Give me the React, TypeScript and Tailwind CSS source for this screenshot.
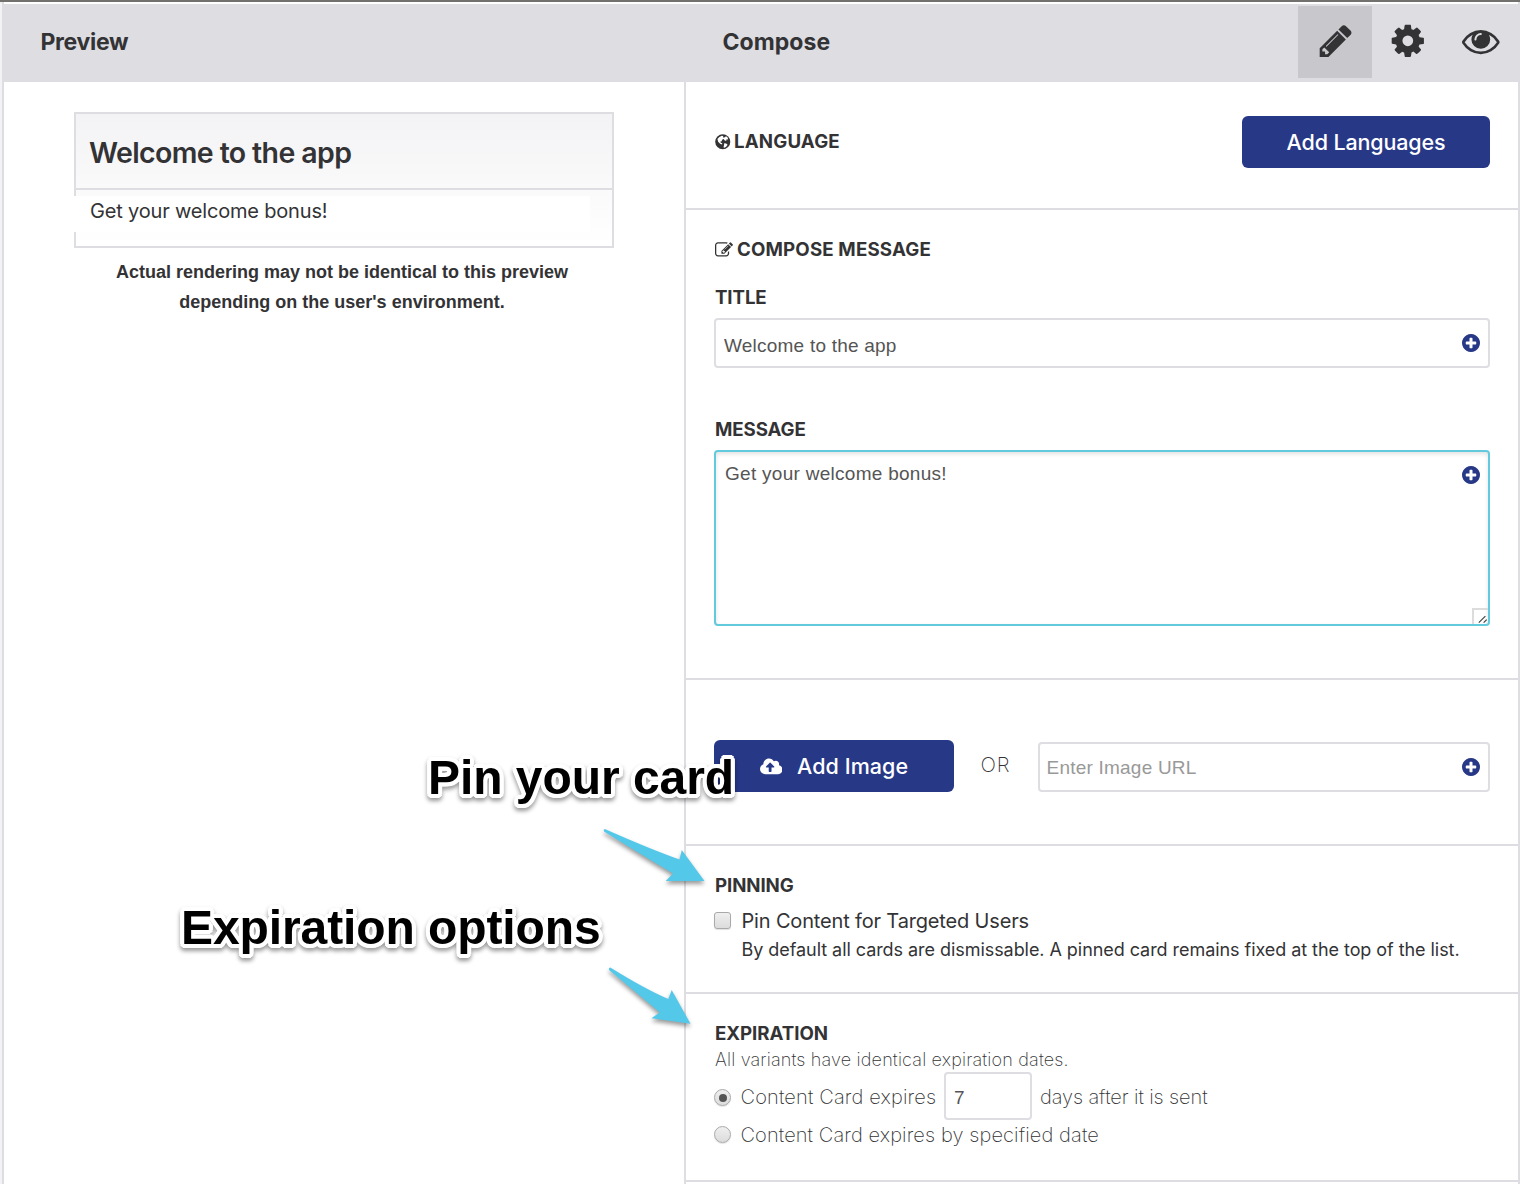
import React from "react";
import { FaCloudUploadAlt } from "react-icons/fa";

type IconProps = { className?: string };

const PencilIcon = ({ className }: IconProps) => (
  <svg viewBox="0 0 1792 1792" fill="currentColor" className={className}>
    <path d="M491 1536l91-91-235-235-91 91v107h128v128h107zm523-928q0-22-22-22-10 0-17 7l-542 542q-7 7-7 17 0 22 22 22 10 0 17-7l542-542q7-7 7-17zm-54-192l416 416-832 832h-416v-416zm683 96q0 53-37 90l-166 166-416-416 166-165q36-38 90-38 53 0 91 38l235 234q37 39 37 91z" />
  </svg>
);

const CogIcon = ({ className }: IconProps) => (
  <svg viewBox="0 0 1792 1792" fill="currentColor" className={className}>
    <path d="M1152 896q0-106-75-181t-181-75-181 75-75 181 75 181 181 75 181-75 75-181zm512-109v222q0 12-8 23t-20 13l-185 28q-19 54-39 91 35 50 107 138 10 12 10 25t-9 23q-27 37-99 108t-94 71q-12 0-26-9l-138-108q-44 23-91 38-16 136-29 186-7 28-36 28h-222q-14 0-24.5-8.5t-11.5-21.5l-28-184q-49-16-90-37l-141 107q-10 9-25 9-14 0-25-11-126-114-165-168-7-10-7-23 0-12 8-23 15-21 51-66.5t54-70.5q-27-50-41-99l-183-27q-13-2-21-12.5t-8-23.5v-222q0-12 8-23t19-13l186-28q14-46 39-92-40-57-107-138-10-12-10-24 0-10 9-23 26-36 98.5-107.5t94.5-71.5q13 0 26 10l138 107q44-23 91-38 16-136 29-186 7-28 36-28h222q14 0 24.5 8.5t11.5 21.5l28 184q49 16 90 37l142-107q9-9 24-9 13 0 25 10 129 119 165 170 7 8 7 22 0 12-8 23-15 21-51 66.5t-54 70.5q26 50 41 98l183 28q13 2 21 12.5t8 23.5z" />
  </svg>
);

const EyeIcon = ({ className }: IconProps) => (
  <svg viewBox="0 0 1792 1792" fill="currentColor" className={className}>
    <path d="M1664 960q-152-236-381-353 61 104 61 225 0 185-131.5 316.5t-316.5 131.5-316.5-131.5-131.5-316.5q0-121 61-225-229 117-381 353 133 205 333.5 326.5t434.5 121.5 434.5-121.5 333.5-326.5zm-720-384q0-20-14-34t-34-14q-125 0-214.5 89.5t-89.5 214.5q0 20 14 34t34 14 34-14 14-34q0-86 61-147t147-61q20 0 34-14t14-34zm848 384q0 34-20 69-140 230-376.5 368.5t-499.5 138.5-499.5-139-376.5-368q-20-35-20-69t20-69q140-229 376.5-368t499.5-139 499.5 139 376.5 368q20 35 20 69z" />
  </svg>
);

const EditIcon = ({ className }: IconProps) => (
  <svg viewBox="0 0 1792 1792" fill="currentColor" className={className}>
    <path d="M888 1184l116-116-152-152-116 116v56h96v96h56zm440-720q-16-16-33 1l-350 350q-17 17-1 33t33-1l350-350q17-17 1-33zm80 594v190q0 119-84.5 203.5t-203.5 84.5h-832q-119 0-203.5-84.5t-84.5-203.5v-832q0-119 84.5-203.5t203.5-84.5h832q63 0 117 25 15 7 18 23 3 17-9 29l-49 49q-14 14-32 8-23-6-45-6h-832q-66 0-113 47t-47 113v832q0 66 47 113t113 47h832q66 0 113-47t47-113v-126q0-13 9-22l64-64q15-15 35-7t20 29zm-96-738l288 288-672 672h-288v-288zm444 132l-92 92-288-288 92-92q28-28 68-28t68 28l152 152q28 28 28 68t-28 68z" />
  </svg>
);

const PlusCircleIcon = ({ className }: IconProps) => (
  <svg viewBox="128 128 1536 1536" fill="currentColor" className={className}>
    <path d="M1344 960v-128q0-26-19-45t-45-19h-256v-256q0-26-19-45t-45-19h-128q-26 0-45 19t-19 45v256h-256q-26 0-45 19t-19 45v128q0 26 19 45t45 19h256v256q0 26 19 45t45 19h128q26 0 45-19t19-45v-256h256q26 0 45-19t19-45zm320-64q0 209-103 385.5t-279.5 279.5-385.5 103-385.5-103-279.5-279.5-103-385.5 103-385.5 279.5-279.5 385.5-103 385.5 103 279.5 279.5 103 385.5z" />
  </svg>
);

const GlobeIcon = ({ className }: IconProps) => (
  <svg viewBox="0 0 32 32" className={className}>
    <circle cx="16" cy="16" r="15.6" fill="currentColor" />
    <path
      fill="#fff"
      d="M5 10.500L9 6l5-2.500 3 .5-.5 2.500 2.500 1-1 3-3.500 1.500-.5 3-3 .5 1 2.500 3 1-.5 2.500-4-1.500-4-4zM19 7l4-2.500 3.500 3 .5 4-3-.5-1 3.500-3.500-1.500-1.500-3zM19 19l4 .5 3 2.500-3 4.500-3.500 2-2-1 1-4z"
    />
  </svg>
);

const inputBase =
  "block rounded-[4px] border-2 border-[#dedde2] bg-white font-['Liberation_Sans',sans-serif] text-[19px] text-[#555] outline-none placeholder:text-[#999]";

const plusBase = "absolute right-[10.5px] h-[18px] w-[18px] text-[#273887]";

const headingBase = "pl-px text-[18.7px] font-bold leading-6 text-[#333335]";

/* White halo built from shadows on a 4px circle, which keeps its corners round. */
const Callout = ({ text, className }: { text: string; className: string }) => (
  <div
    className={`absolute whitespace-nowrap font-['Liberation_Sans',sans-serif] text-[48px] font-bold leading-[56px] text-black [text-shadow:4px_0_0_#fff,3.7px_1.5px_0_#fff,2.8px_2.8px_0_#fff,1.5px_3.7px_0_#fff,0_4px_0_#fff,-1.5px_3.7px_0_#fff,-2.8px_2.8px_0_#fff,-3.7px_1.5px_0_#fff,-4px_0_0_#fff,-3.7px_-1.5px_0_#fff,-2.8px_-2.8px_0_#fff,-1.5px_-3.7px_0_#fff,0_-4px_0_#fff,1.5px_-3.7px_0_#fff,2.8px_-2.8px_0_#fff,3.7px_-1.5px_0_#fff,2px_0_0_#fff,-2px_0_0_#fff,0_2px_0_#fff,0_-2px_0_#fff] [filter:drop-shadow(0_3px_2px_rgba(0,0,0,0.4))] ${className}`}
  >
    {text}
  </div>
);

const Radio = ({ checked, className }: { checked?: boolean; className: string }) => (
  <span
    className={`flex h-[17px] w-[17px] shrink-0 items-center justify-center rounded-full border border-[#a9a9a9] bg-linear-to-b from-[#efefef] to-[#dcdcdc] shadow-[0_1px_1px_rgba(0,0,0,0.12)] ${className}`}
  >
    {checked && <span className="h-2 w-2 rounded-full bg-[#555]" />}
  </span>
);

export default function App() {
  return (
    <div className="relative flex h-[1184px] w-[1520px] flex-col overflow-hidden bg-white font-['Inter',sans-serif] text-[#333335]">
      <div className="h-[2px] shrink-0 bg-[#72716d]" />
      <div className="flex min-h-0 flex-1">
        <div className="w-[2px] bg-[#f3f3f6]" />
        <div className="flex min-w-0 flex-1 flex-col border-x-2 border-[#dedde2] pt-[2px]">
          <header className="-mx-[2px] flex h-[78px] shrink-0 bg-[#dedde2] pl-[38.5px] pr-[2px]">
            <h2 className="w-[682px] text-[23px] font-bold leading-[77px] tracking-[-0.3px]">Preview</h2>
            <h2 className="flex-1 text-[23px] font-bold leading-[77px] tracking-[0.05px]">Compose</h2>
            <nav className="flex pt-[2px]">
              <button className="flex h-[72px] w-[74px] items-center justify-center bg-[#c8c7cc] pb-[2px] pl-px">
                <PencilIcon className="h-[37.6px] w-[37.6px]" />
              </button>
              <button className="flex h-[72px] w-[73px] items-center justify-center pb-[2px] pr-px">
                <CogIcon className="h-[37.6px] w-[37.6px]" />
              </button>
              <button className="flex h-[72px] w-[73px] items-center justify-center pb-[2px] pr-px">
                <EyeIcon className="h-[37.6px] w-[37.6px]" />
              </button>
            </nav>
          </header>

          <div className="flex min-h-0 flex-1">
            <section className="w-[680px] shrink-0 pl-[70px] pt-[30px]">
              <div className="h-[136px] w-[540px] border-2 border-[#dedde2] bg-linear-to-b from-[#f3f3f5] to-white">
                <h3 className="h-[76px] border-b-2 border-[#dedde2] pl-[13px] text-[28.5px] font-semibold leading-[77px] tracking-[-0.62px]">
                  Welcome to the app
                </h3>
                <p className="-ml-[2px] mt-[6px] h-[36px] w-[516px] bg-white pl-4 text-[20px] leading-[30px] tracking-[-0.18px]">
                  Get your welcome bonus!
                </p>
              </div>
              <p className="mt-[9px] w-[536px] text-center font-['Liberation_Sans',sans-serif] text-[18px] font-bold leading-[30px]">
                Actual rendering may not be identical to this preview
                <br />
                depending on the user's environment.
              </p>
            </section>

            <main className="flex min-w-0 flex-1 flex-col border-l-2 border-[#dedde2]">
              <section className="flex h-[128px] shrink-0 items-start justify-between border-b-2 border-[#dedde2] px-7 pt-[34px]">
                <h4 className={`${headingBase} mt-[14px] flex items-center gap-[3.5px]`}>
                  <GlobeIcon className="h-[15.5px] w-[15.5px]" />
                  <span className="tracking-[0.15px]">LANGUAGE</span>
                </h4>
                <button className="h-[52px] w-[248px] rounded-[6px] bg-[#273887] pt-px text-[21.5px] font-medium tracking-[-0.14px] text-white">
                  Add Languages
                </button>
              </section>

              <section className="h-[470px] shrink-0 border-b-2 border-[#dedde2] px-7 pt-7">
                <h4 className={`${headingBase} flex items-center gap-1`}>
                  <EditIcon className="h-[18px] w-[18px]" />
                  <span className="tracking-[0.15px]">COMPOSE MESSAGE</span>
                </h4>
                <h4 className={`${headingBase} mt-6 tracking-[-0.1px]`}>TITLE</h4>
                <div className="relative mt-2">
                  <input className={`${inputBase} h-[50px] w-full pl-2 pr-10 pt-[6px] tracking-[0.22px]`} defaultValue="Welcome to the app" />
                  <PlusCircleIcon className={`${plusBase} top-[15.5px]`} />
                </div>
                <h4 className={`${headingBase} mt-[50px] tracking-[-0.1px]`}>MESSAGE</h4>
                <div className="relative mt-2">
                  <textarea
                    className="block h-[176px] w-full resize-none rounded-[4px] border-2 border-[#62cadd] bg-white py-2 pl-[9px] pr-10 font-['Liberation_Sans',sans-serif] text-[19px] leading-7 tracking-[0.28px] text-[#555] shadow-[inset_0_2px_4px_rgba(0,0,0,0.12)] outline-none"
                    defaultValue="Get your welcome bonus!"
                  />
                  <PlusCircleIcon className={`${plusBase} top-[15.5px]`} />
                  <svg viewBox="0 0 16 16" className="absolute bottom-[2px] right-[2px] h-4 w-4 rounded-br-[2px] border-l-2 border-t-2 border-[#dcdcdc]">
                    <path d="M5.5 14.5L13 7M11 14.5L14.500 11" stroke="#444" strokeWidth="1.400" fill="none" />
                  </svg>
                </div>
              </section>

              <section className="flex h-[166px] shrink-0 items-start border-b-2 border-[#dedde2] px-7 pt-[60px]">
                <button className="flex h-[52px] w-[240px] items-center rounded-[6px] bg-[#273887] pl-[45.5px] pt-px text-[21.5px] font-medium tracking-[0.08px] text-white">
                  <FaCloudUploadAlt className="mr-[15px] h-[22.5px] w-[22.5px]" />
                  Add Image
                </button>
                <span className="ml-[26.5px] w-[57.5px] text-[20.5px] font-extralight leading-[50px] tracking-[0.7px]">OR</span>
                <div className="relative mt-[2px] flex-1">
                  <input className={`${inputBase} h-[50px] w-full pl-[6.5px] pr-10 pt-px tracking-[0.22px]`} placeholder="Enter Image URL" />
                  <PlusCircleIcon className={`${plusBase} top-[15.5px]`} />
                </div>
              </section>

              <section className="h-[148px] shrink-0 border-b-2 border-[#dedde2] px-7 pt-7">
                <h4 className={`${headingBase} tracking-[-0.1px]`}>PINNING</h4>
                <div className="mt-[7px] flex">
                  <span className="mt-[7px] h-[17px] w-[17px] rounded-[3px] border border-[#a9a9a9] bg-linear-to-b from-[#efefef] to-[#dcdcdc] shadow-[0_1px_1px_rgba(0,0,0,0.12)]" />
                  <div className="ml-[10.5px] whitespace-nowrap">
                    <div className="text-[20px] leading-8 tracking-[-0.16px]">Pin Content for Targeted Users</div>
                    <div className="text-[18px] leading-[26px] tracking-[-0.055px]">
                      By default all cards are dismissable. A pinned card remains fixed at the top of the list.
                    </div>
                  </div>
                </div>
              </section>

              <section className="h-[188px] shrink-0 border-b-2 border-[#dedde2] px-7 pt-7">
                <h4 className={`${headingBase} tracking-[-0.05px]`}>EXPIRATION</h4>
                <p className="pl-px text-[18px] font-extralight leading-7 tracking-[0.17px]">All variants have identical expiration dates.</p>
                <div className="-mt-[2px] flex h-12 items-center whitespace-nowrap text-[20px] font-extralight">
                  <Radio checked className="mt-[3px]" />
                  <span className="ml-[9.5px] mt-[2px] w-[203.5px] tracking-[0.16px]">Content Card expires</span>
                  <input className="h-12 w-[88px] rounded-[4px] border-2 border-[#dedde2] bg-white pl-2 pt-[3px] font-['Liberation_Sans',sans-serif] text-[19px] font-normal text-[#555] outline-none" defaultValue="7" />
                  <span className="ml-2 mt-[2px] tracking-[-0.1px]">days after it is sent</span>
                </div>
                <div className="flex h-[30px] items-center text-[20px] font-extralight">
                  <Radio className="-mt-[2px]" />
                  <span className="ml-[9.5px] tracking-[0.11px]">Content Card expires by specified date</span>
                </div>
              </section>
            </main>
          </div>
        </div>
      </div>

      {/* Annotations floating over the page */}
      <Callout text="Pin your card" className="left-[428px] top-[750px] tracking-[-0.05px]" />
      <Callout text="Expiration options" className="left-[181px] top-[900px] tracking-[-0.1px]" />
      <svg viewBox="590 820 130 215" className="absolute left-[590px] top-[820px] h-[215px] w-[130px] [filter:drop-shadow(0_3px_2px_rgba(0,0,0,0.4))]" fill="#54c8e8">
        <path d="M604.8 829Q650 849 679.500 859.500L681.800 850L704.500 881L665.700 881L673 873.500Q645 857 604 831.500Q603 829.500 604.800 829Z" />
        <path d="M610.300 967.500Q645 989 668.300 999L671.700 990L690.500 1023.700L651.400 1018.300L659.700 1012.500Q639 995 609 970Q608.500 968 610.300 967.500Z" />
      </svg>
    </div>
  );
}
